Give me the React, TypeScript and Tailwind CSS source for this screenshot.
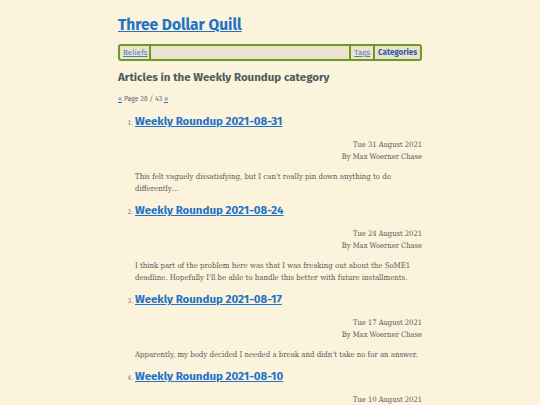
const articles = [
  {
    title: 'Weekly Roundup 2021-08-31',
    date: 'Tue 31 August 2021',
    excerpt: "This felt vaguely dissatisfying, but I can't really pin down anything to do differently…",
  },
  {
    title: 'Weekly Roundup 2021-08-24',
    date: 'Tue 24 August 2021',
    excerpt:
      "I think part of the problem here was that I was freaking out about the SoME1 deadline. Hopefully I'll be able to handle this better with future installments.",
  },
  {
    title: 'Weekly Roundup 2021-08-17',
    date: 'Tue 17 August 2021',
    excerpt: "Apparently, my body decided I needed a break and didn't take no for an answer.",
  },
  {
    title: 'Weekly Roundup 2021-08-10',
    date: 'Tue 10 August 2021',
    excerpt: 'Not much got done this week, but that is fine.',
  },
]

const sans = "font-['Fira_Sans','Lato','Open_Sans',sans-serif]"
const serif = "font-['DejaVu_Serif_Condensed','DejaVu_Serif',serif]"

export default function App() {
  return (
    <div className="h-[405px] bg-[#fbf3dc] overflow-hidden">
      <div className="w-[304px] mx-auto pt-[14px]">
        <h1 className={`${sans} text-[15.5px] font-bold leading-[22px]`}>
          <a href="#" className="text-[#1f72c6] underline">
            Three Dollar Quill
          </a>
        </h1>

        {/* nav bar */}
        <nav
          className={`${sans} mt-[8px] flex items-stretch h-[17px] border-2 border-[#6c9b22] rounded-[3px] bg-[#ebe3cf] text-[8px] leading-[13px] px-[2px]`}
        >
          <a href="#" className="text-[#4e7fb6] underline px-[1px]">
            Beliefs
          </a>
          <span className="w-[2px] bg-[#6c9b22]" />
          <span className="flex-1" />
          <span className="w-[2px] bg-[#6c9b22]" />
          <a href="#" className="text-[#4e7fb6] underline px-[3px]">
            Tags
          </a>
          <span className="w-[2px] bg-[#6c9b22]" />
          <a href="#" className="text-[#2a5f99] font-bold pl-[3px] pr-[1px]">
            Categories
          </a>
        </nav>

        <h2 className={`${sans} mt-[8px] text-[11.5px] font-bold text-[#4d5c61] leading-[16px]`}>
          Articles in the Weekly Roundup category
        </h2>

        <p className={`${sans} mt-[9px] text-[7px] text-[#6b6b6b] leading-[10px]`}>
          <a href="#" className="text-[#1f72c6] underline">«</a> Page 26 / 43{' '}
          <a href="#" className="text-[#1f72c6] underline">»</a>
        </p>

        <ol className="mt-[7px] pl-[17px]">
          {articles.map((a, i) => (
            <li key={a.title} className="flex mb-[5px]">
              <span className={`${serif} text-[6.5px] text-[#666] w-[7px] mt-[8px] -ml-[9px] mr-[2px] text-right`}>
                {i + 1}.
              </span>
              <div className="flex-1">
                <h3 className={`${sans} text-[11.5px] font-bold leading-[20px]`}>
                  <a href="#" className="text-[#1f72c6] underline">
                    {a.title}
                  </a>
                </h3>
                <div className={`${serif} mt-[8px] text-right text-[7.5px] leading-[12px] text-[#5a5a5a]`}>
                  <div>{a.date}</div>
                  <div>By Max Woerner Chase</div>
                </div>
                <p className={`${serif} mt-[8px] text-[7.75px] leading-[12px] text-[#5a5a5a]`}>{a.excerpt}</p>
              </div>
            </li>
          ))}
        </ol>
      </div>
    </div>
  )
}
